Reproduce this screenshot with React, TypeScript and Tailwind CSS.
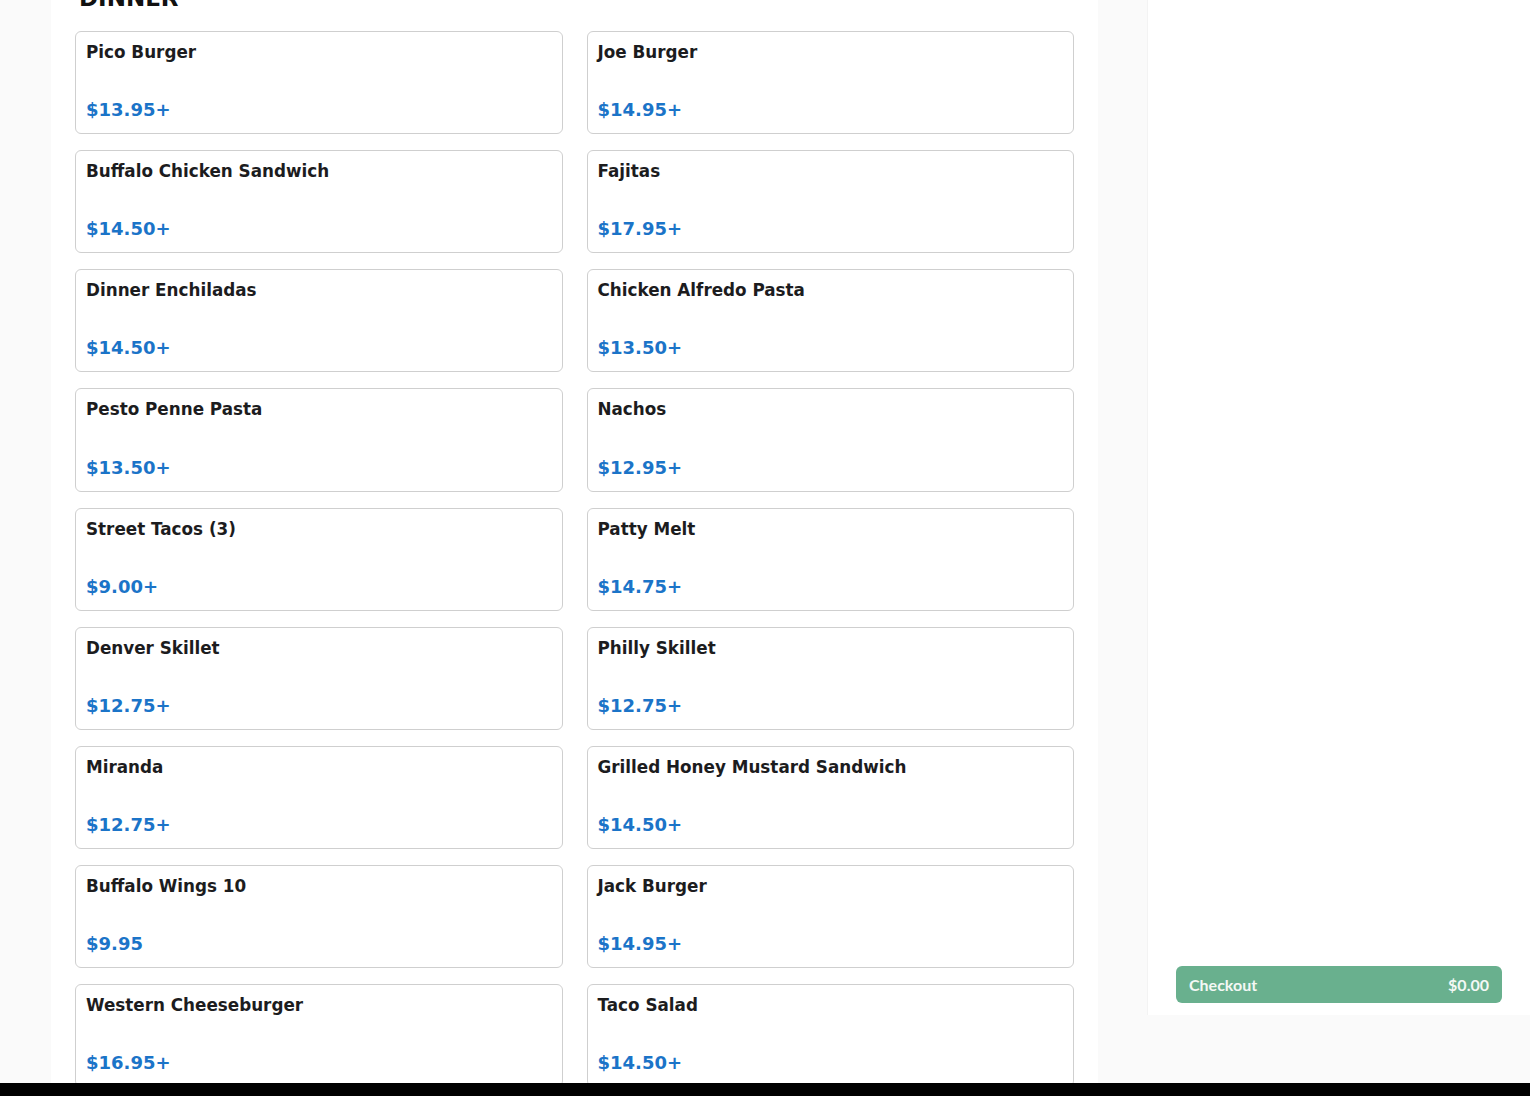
const items = [
  { name: 'Pico Burger', price: '$13.95+' },
  { name: 'Joe Burger', price: '$14.95+' },
  { name: 'Buffalo Chicken Sandwich', price: '$14.50+' },
  { name: 'Fajitas', price: '$17.95+' },
  { name: 'Dinner Enchiladas', price: '$14.50+' },
  { name: 'Chicken Alfredo Pasta', price: '$13.50+' },
  { name: 'Pesto Penne Pasta', price: '$13.50+' },
  { name: 'Nachos', price: '$12.95+' },
  { name: 'Street Tacos (3)', price: '$9.00+' },
  { name: 'Patty Melt', price: '$14.75+' },
  { name: 'Denver Skillet', price: '$12.75+' },
  { name: 'Philly Skillet', price: '$12.75+' },
  { name: 'Miranda', price: '$12.75+' },
  { name: 'Grilled Honey Mustard Sandwich', price: '$14.50+' },
  { name: 'Buffalo Wings 10', price: '$9.95' },
  { name: 'Jack Burger', price: '$14.95+' },
  { name: 'Western Cheeseburger', price: '$16.95+' },
  { name: 'Taco Salad', price: '$14.50+' },
];

function MenuCard({ name, price }: { name: string; price: string }) {
  return (
    <div className="h-[103.125px] bg-white border border-[#cfcfcf] rounded-md px-[10px] pt-[7px] pb-[10px] flex flex-col justify-between cursor-pointer">
      <h3 className="text-[16.8px] leading-[26px] font-bold text-[#1c1c1e]">{name}</h3>
      <p className="text-[18px] leading-[27px] font-bold text-[#1b74c8]">{price}</p>
    </div>
  );
}

export default function App() {
  return (
    <div className="h-[1096px] flex flex-col overflow-hidden font-['DejaVu_Sans',sans-serif]">
      <div className="h-[1083px] flex bg-[#fafafa] overflow-hidden pl-[51px]">
        {/* Menu panel */}
        <div className="w-[1047px] bg-white px-6 shrink-0">
          <h2 className="-mt-[18px] h-[32px] leading-[32px] mb-[17px] ml-1 text-[23px] font-bold text-[#111]">
            DINNER
          </h2>
          <div className="grid grid-cols-2 gap-x-6 gap-y-4">
            {items.map(item => (
              <MenuCard key={item.name} name={item.name} price={item.price} />
            ))}
          </div>
        </div>

        {/* Cart sidebar */}
        <div className="ml-[49px] w-[383px] h-[1015px] bg-white border-l border-[#f3f3f3] shrink-0 flex flex-col justify-end pl-[28px] pr-[28px] pb-3">
          <button className="h-[37px] w-full rounded-md bg-[#69b08e] flex items-center justify-between px-[13px] text-[16px] font-bold text-[#f4f8f5] font-['Lato',sans-serif]">
            <span>Checkout</span>
            <span>$0.00</span>
          </button>
        </div>
      </div>
      <div className="h-[13px] bg-black" />
    </div>
  );
}
